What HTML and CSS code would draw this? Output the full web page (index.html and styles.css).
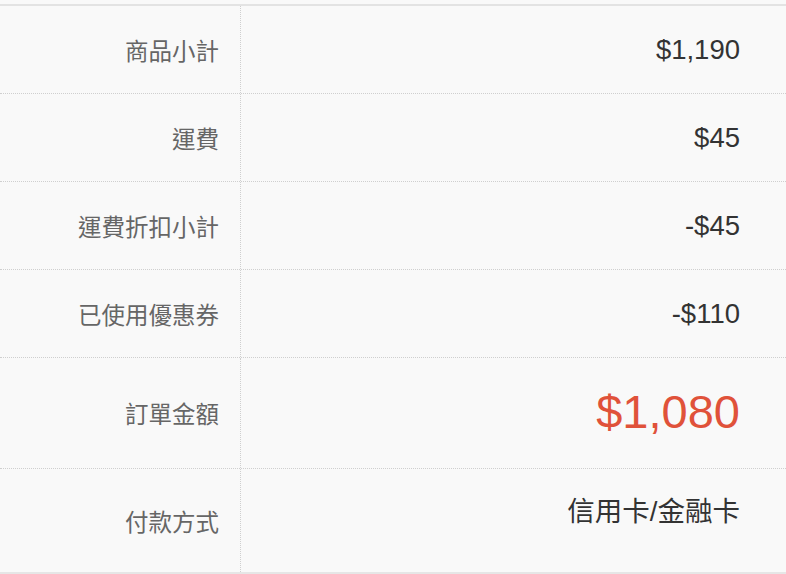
FILE: index.html
```html
<!DOCTYPE html>
<html>
  <head>
    <meta charset="utf-8">
    <title>訂單明細</title>
    <link rel="stylesheet" href="styles.css">
  </head>
  <body>
    <div class="resumo">
      <div class="linha">
        <div class="rotulo">商品小計</div>
        <div class="valor">$1,190</div>
      </div>
      <div class="linha">
        <div class="rotulo">運費</div>
        <div class="valor">$45</div>
      </div>
      <div class="linha">
        <div class="rotulo">運費折扣小計</div>
        <div class="valor">-$45</div>
      </div>
      <div class="linha">
        <div class="rotulo">已使用優惠券</div>
        <div class="valor">-$110</div>
      </div>
      <div class="linha total">
        <div class="rotulo">訂單金額</div>
        <div class="valor">$1,080</div>
      </div>
      <div class="linha pagamento">
        <div class="rotulo">付款方式</div>
        <div class="valor">信用卡/金融卡</div>
      </div>
    </div>
  </body>
</html>
```

FILE: styles.css
```css
body{
  margin: 0;
  background-color: #f9f9f9;
  font-family: "Liberation Sans", "Noto Sans CJK TC", sans-serif;
  overflow: hidden;
}
.resumo{
  margin-top: 4px;
  border-top: 2px solid #e3e3e3;
  border-bottom: 2px solid #e6e6e6;
}
.linha{
  display: grid;
  grid-template-columns: 241px 1fr;
  height: 88px;
  border-bottom: 1px dotted #cfcfcf;
  box-sizing: border-box;
}
.rotulo{
  display: flex;
  align-items: center;
  justify-content: flex-end;
  padding-right: 21px;
  border-right: 1px dotted #cfcfcf;
  font-size: 23.5px;
  color: #666;
}
.valor{
  display: flex;
  align-items: center;
  justify-content: flex-end;
  padding-right: 46px;
  font-size: 27.5px;
  color: #333;
}
.total{
  height: 111px;
}
.total .valor{
  font-size: 47px;
  color: #e0523a;
  padding-bottom: 3px;
}
.pagamento{
  height: 103px;
  border-bottom: none;
}
.pagamento .valor{
  align-items: flex-start;
  line-height: 32px;
  padding-top: 27px;
}
```
